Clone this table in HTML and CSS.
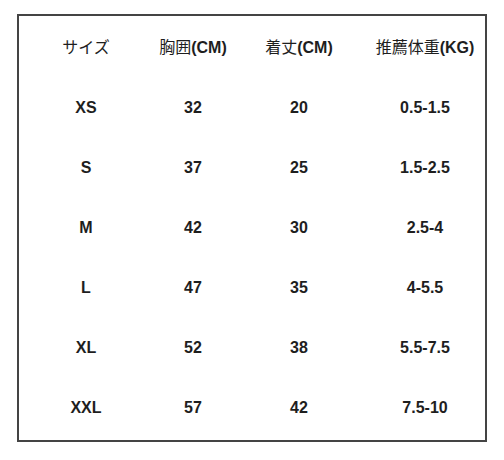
FILE: index.html
```html
<!DOCTYPE html>
<html>
<head>
<meta charset="utf-8">
<link rel="stylesheet" href="styles.css">
</head>
<body>
<div class="chart">
  <div class="row head"><span><i>サイズ</i></span><span><i>胸囲</i>(CM)</span><span><i>着丈</i>(CM)</span><span><i>推薦体重</i>(KG)</span></div>
  <div class="row"><span>XS</span><span>32</span><span>20</span><span>0.5-1.5</span></div>
  <div class="row"><span>S</span><span>37</span><span>25</span><span>1.5-2.5</span></div>
  <div class="row"><span>M</span><span>42</span><span>30</span><span>2.5-4</span></div>
  <div class="row"><span>L</span><span>47</span><span>35</span><span>4-5.5</span></div>
  <div class="row"><span>XL</span><span>52</span><span>38</span><span>5.5-7.5</span></div>
  <div class="row"><span>XXL</span><span>57</span><span>42</span><span>7.5-10</span></div>
</div>
</body>
</html>
```
FILE: styles.css
```css
html, body { margin: 0; padding: 0; background: #fff; }
body { padding: 14px 0 0 17px; }
.chart {
  width: 466px;
  border: 2px solid #444;
  padding-bottom: 2px;
  font-family: "Liberation Sans", Arial, "Noto Sans CJK JP", sans-serif;
  font-size: 16px;
  font-weight: bold;
  color: #1e1e1e;
}
.row {
  display: grid;
  grid-template-columns: 134px 80px 132px 120px;
  height: 60px;
  align-items: center;
  justify-items: center;
}
.row.head { height: 62px; padding-bottom: 0; }
.head > span { transform: translateY(-1px); }
.head i { font-style: normal; font-weight: normal; font-family: "Noto Sans CJK JP", sans-serif; }
```
